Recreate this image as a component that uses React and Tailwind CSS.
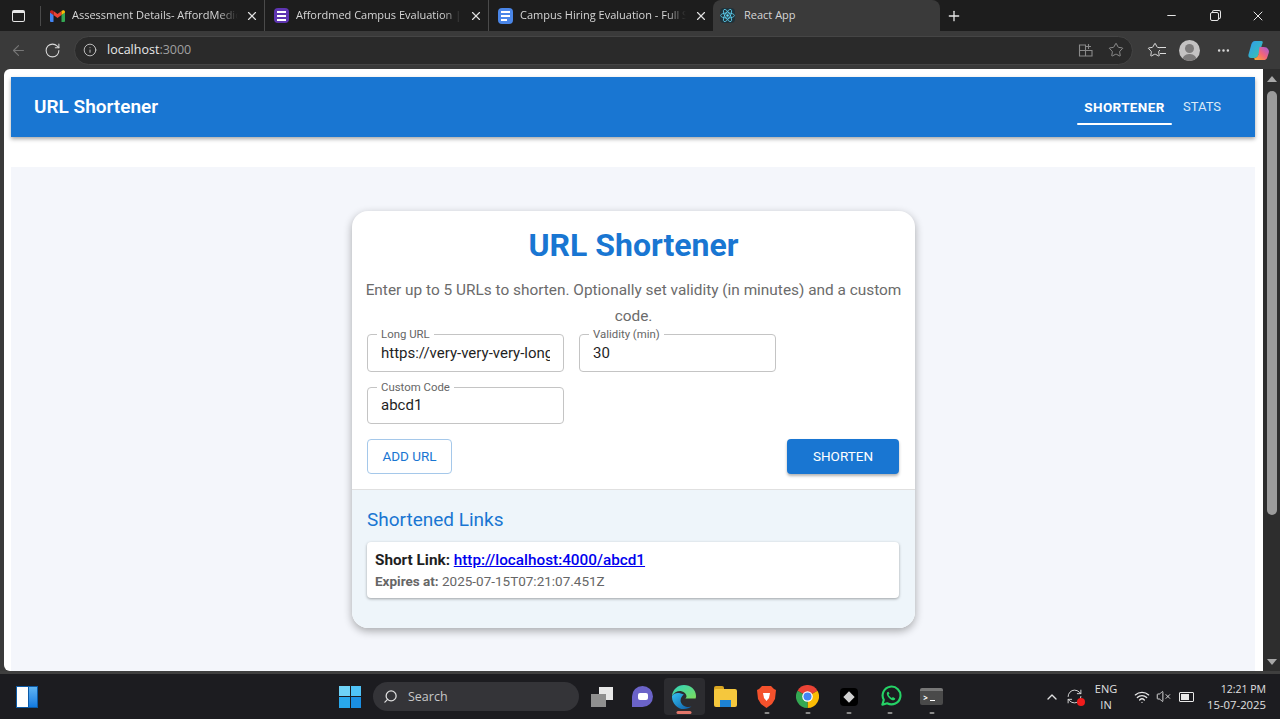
import React from 'react';
import { ArrowLeft, RotateCw, Info, X, Plus, Minus, Star, MoreHorizontal, Search, ChevronUp, Wifi, VolumeX, RefreshCw } from 'lucide-react';

const GmailIcon = () => (
  <svg width="15" height="12" viewBox="0 0 15 12">
    <path d="M0 2v9a1 1 0 0 0 1 1h2.5V5z" fill="#4285f4" />
    <path d="M15 2v9a1 1 0 0 1-1 1h-2.5V5z" fill="#34a853" />
    <path d="M3.5 5 7.5 8l4-3V1l-4 3-4-3z" fill="#ea4335" />
    <path d="M0 2c0-1.6 2-2.2 3.5-1v4L0 2.5z" fill="#c5221f" />
    <path d="M15 2c0-1.6-2-2.2-3.5-1v4L15 2.5z" fill="#fbbc04" />
  </svg>
);

const FormsIcon = () => (
  <div className="w-[15px] h-[15px] rounded-sm bg-[#5e35b1] flex flex-col items-center justify-center gap-[2px]">
    <div className="w-[9px] h-[2px] bg-white" />
    <div className="w-[9px] h-[2px] bg-white" />
    <div className="w-[9px] h-[2px] bg-white" />
  </div>
);

const DocsIcon = () => (
  <div className="w-[15px] h-[16px] rounded-sm bg-[#4a86e8] flex flex-col justify-center gap-[2px] px-[3px]">
    <div className="w-[9px] h-[2px] bg-white" />
    <div className="w-[9px] h-[2px] bg-white" />
    <div className="w-[6px] h-[2px] bg-white" />
  </div>
);

const ReactIcon = () => (
  <div className="w-[15px] h-[15px] rounded-sm bg-[#20323a] flex items-center justify-center">
    <svg width="15" height="15" viewBox="-12 -12 24 24" fill="none" stroke="#61dafb" strokeWidth="1.2">
      <circle r="2" fill="#61dafb" stroke="none" />
      <ellipse rx="11" ry="4.2" />
      <ellipse rx="11" ry="4.2" transform="rotate(60)" />
      <ellipse rx="11" ry="4.2" transform="rotate(120)" />
    </svg>
  </div>
);

const CopilotIcon = () => (
  <svg width="21" height="21" viewBox="0 0 21 21">
    <defs>
      <linearGradient id="cop-a" x1="0" y1="0" x2="1" y2="1">
        <stop offset="0" stopColor="#2f9bf0" />
        <stop offset="1" stopColor="#38c6a8" />
      </linearGradient>
      <linearGradient id="cop-b" x1="0" y1="1" x2="1" y2="0">
        <stop offset="0" stopColor="#f7b32b" />
        <stop offset="0.5" stopColor="#f2647a" />
        <stop offset="1" stopColor="#a05be0" />
      </linearGradient>
    </defs>
    <path d="M7 1h6.500c1 0 1.500.8 1.200 1.800L10.500 15c-.7 2-2 3-4 3H3c-2 0-3-1.500-2.500-3.500l2.800-10C4 2.500 5 1 7 1z" fill="url(#cop-a)" />
    <path d="M11.500 7h4c2.500 0 3.800.6 5 2.800.6 1.200.5 2.200.2 3.200l-1.500 4.500C18.600 19.500 17.400 20 15.500 20H8c-1.500 0-2-1-1.500-2 2-.2 3.200-1.300 4-3.500z" fill="url(#cop-b)" />
  </svg>
);

const EdgeIcon = () => (
  <svg width="24" height="24" viewBox="0 0 24 24">
    <defs>
      <linearGradient id="edge-a" x1="0" y1="0" x2="1" y2="1">
        <stop offset="0" stopColor="#35c1f1" />
        <stop offset="1" stopColor="#0c59a4" />
      </linearGradient>
      <linearGradient id="edge-b" x1="0" y1="0" x2="1" y2="1">
        <stop offset="0" stopColor="#2dd4bf" />
        <stop offset="1" stopColor="#7ddc5c" />
      </linearGradient>
    </defs>
    <path d="M12 0C5.500 0 .5 4.800 0 11c2-3.500 6-5.500 9.500-4.800 3 .6 5 2.800 5 5 0 1-.5 1.600-1.200 2.200h10.300c.3-.8.400-1.600.400-2.400C24 4.500 18.500 0 12 0z" fill="url(#edge-b)" />
    <path d="M0 11c-.3 7 5 13 12 13 3 0 5.500-.8 7.500-2.400-4.500 1.400-9.500-.6-10.700-4.600-.8-2.800.6-5.500 3-7.500C7.500 7.500 2.500 7 0 11z" fill="url(#edge-a)" />
  </svg>
);

const FadeTitle = ({ children }) => (
  <span className="ml-[7px] w-[166px] overflow-hidden whitespace-nowrap text-[11px] text-[#d6d6d6] [mask-image:linear-gradient(to_right,black_88%,transparent)]">{children}</span>
);

const Tab = ({ icon, title, divider = true }) => (
  <div className={`w-[224px] h-[31px] flex items-center pl-[8px] pr-[5px] shrink-0 ${divider ? 'border-r border-[#4a4a4a]' : ''}`}>
    <div className="w-[16px] flex justify-center shrink-0">{icon}</div>
    <FadeTitle>{title}</FadeTitle>
    <X size={14} className="ml-auto text-[#e0e0e0]" />
  </div>
);

const Field = ({ label, value }) => (
  <div className="relative w-[197px] h-[37.5px] border border-[#c4c4c4] rounded flex items-center px-[13px]">
    <span className="absolute left-[9px] -top-[6px] bg-white px-[4px] text-[11.4px] leading-[11px] text-[#666666]">{label}</span>
    <input readOnly value={value} className="block w-full bg-transparent outline-none text-[15px] leading-[18px] text-[#1f1f1f]" />
  </div>
);

const Slot = ({ children, active, dot }) => (
  <div className={`relative w-[41.25px] h-[37px] flex items-center justify-center rounded ${active ? 'bg-[#2c2c30]' : ''}`}>
    {children}
    {dot && <div className="absolute left-1/2 -translate-x-1/2 bottom-[1px] w-[5px] h-[2px] rounded-full bg-[#8a8a8a]" />}
    {active && <div className="absolute left-1/2 -translate-x-1/2 bottom-[1px] w-[15px] h-[3px] rounded-full bg-[#e2766a]" />}
  </div>
);

export default function App() {
  return (
    <div className="w-[1280px] h-[719px] overflow-hidden flex flex-col bg-[#1e1e20] font-['Roboto',sans-serif]">
      {/* tab strip */}
      <div className="h-[31px] shrink-0 bg-[#1d1d1d] flex items-center font-['Open_Sans',sans-serif]">
        <div className="w-[40px] h-full flex items-center justify-center shrink-0 pr-[4px]">
          <div className="w-[13px] h-[12px] rounded-[2px] border-[1.5px] border-[#e6e6e6] border-t-[3px]" />
        </div>
        <div className="w-px h-[20px] bg-[#4a4a4a] shrink-0" />
        <Tab icon={<GmailIcon />} title="Assessment Details- AffordMedical" />
        <Tab icon={<FormsIcon />} title="Affordmed Campus Evaluation | Google" />
        <Tab icon={<DocsIcon />} title="Campus Hiring Evaluation - Full Stack" divider={false} />
        <div className="w-[227px] h-[31px] bg-[#3a3a3a] rounded-t-lg flex items-center pl-[7px] pr-[8px] shrink-0">
          <ReactIcon />
          <span className="ml-[9px] text-[11px] text-[#d6d6d6]">React App</span>
        </div>
        <Plus size={16} className="ml-[6px] text-[#e6e6e6]" />
        <div className="ml-auto flex items-center h-full">
          <div className="w-[42px] flex justify-center"><Minus size={13} className="text-[#e6e6e6]" /></div>
          <div className="w-[44px] flex justify-center relative">
            <div className="w-[9px] h-[9px] border border-[#e6e6e6] rounded-[2px] bg-[#1d1d1d] mt-[2px] shadow-[2px_-2px_0_-1px_#1d1d1d,2px_-2px_0_0_#e6e6e6]" />
          </div>
          <div className="w-[44px] flex justify-center"><X size={16} strokeWidth={1.5} className="text-[#e6e6e6]" /></div>
        </div>
      </div>

      {/* toolbar */}
      <div className="h-[38px] shrink-0 bg-[#3a3a3a] flex items-center pl-[10px] font-['Open_Sans',sans-serif]">
        <ArrowLeft size={17} strokeWidth={1.5} className="text-[#777777]" />
        <RotateCw size={17} strokeWidth={1.5} className="ml-[17px] text-[#d8d8d8]" />
        <div className="ml-[13px] w-[1059px] h-[29px] rounded-full bg-[#2a2a2a] border border-[#454545] flex items-center pl-[8px] pr-[8px]">
          <Info size={14} strokeWidth={1.5} className="text-[#cfcfcf]" />
          <span className="ml-[10px] text-[12.5px] text-[#e8e8e8]">localhost<span className="text-[#a0a0a0]">:3000</span></span>
          <svg className="ml-auto" width="16" height="16" viewBox="0 0 16 16" fill="none" stroke="#8a8a8a" strokeWidth="1.1">
            <path d="M1.5 3h6v11h-6zM1.5 8.5h12.5V14H7.5M10.5 2v5M8 4.5h5" />
          </svg>
          <Star size={16} strokeWidth={1.3} className="ml-[14px] text-[#9a9a9a]" />
        </div>
        <div className="ml-[14px] relative">
          <Star size={16} strokeWidth={1.5} className="text-[#dcdcdc]" />
          <div className="absolute right-[-3px] top-[5px] w-[6px] h-[7px] border-y-[1.5px] border-[#dcdcdc] bg-[#3a3a3a]" />
        </div>
        <div className="ml-[16px] w-[21px] h-[21px] rounded-full bg-[#c4c2c2] flex flex-col items-center justify-end overflow-hidden">
          <div className="w-[9px] h-[9px] rounded-full bg-[#7d7b7b]" />
          <div className="w-[15px] h-[7px] mt-[1px] rounded-t-full bg-[#7d7b7b]" />
        </div>
        <MoreHorizontal size={15} className="ml-[16px] text-[#d8d8d8]" />
        <div className="ml-[17px]"><CopilotIcon /></div>
      </div>

      {/* browser page */}
      <div className="h-[602px] shrink-0 flex pl-[4px] bg-[#3a3a3a]">
        <div className="w-[1259px] bg-white rounded-tl-md rounded-bl-md overflow-hidden pl-[7px] pr-[8px] pt-[8px] flex flex-col">
          <header className="h-[60px] shrink-0 bg-[#1976d2] shadow-[0_2px_4px_rgba(0,0,0,0.35)] flex items-center pl-[23px] pr-[33px] relative">
            <span className="text-[19px] font-semibold text-white">URL Shortener</span>
            <div className="ml-auto flex items-center h-full">
              <div className="relative w-[95px] h-full flex items-center justify-center">
                <span className="text-[13.5px] font-bold tracking-[0.35px] text-white">SHORTENER</span>
                <div className="absolute left-0 right-0 bottom-[12px] h-[2px] rounded bg-white" />
              </div>
              <span className="ml-[11px] w-[39px] text-[13px] text-[#dbe9f7]">STATS</span>
            </div>
          </header>

          <main className="mt-[30px] flex-1 bg-[#f4f6fb] flex justify-center pt-[44px] pl-[1px]">
            <div className="w-[563px] h-[417px] bg-white rounded-2xl shadow-[0_3px_8px_rgba(0,0,0,0.32)] overflow-hidden flex flex-col">
              <div className="h-[278px] shrink-0 pl-[15px] pr-[15px] pt-[13px] flex flex-col">
                <h1 className="text-[32px] leading-[42px] font-bold text-[#1976d2] text-center">URL Shortener</h1>
                <p className="-mx-[4px] mt-[11px] text-[15.4px] leading-[26px] text-[#6b6b6b] text-center">Enter up to 5 URLs to shorten. Optionally set validity (in minutes) and a custom code.</p>
                <div className="mt-[5px] flex gap-[15px]">
                  <Field label="Long URL" value="https://very-very-very-long-url.com" />
                  <Field label="Validity (min)" value="30" />
                </div>
                <div className="mt-[15px]">
                  <Field label="Custom Code" value="abcd1" />
                </div>
                <div className="mt-[15px] flex items-center justify-between pr-[1px]">
                  <button className="w-[85px] h-[35px] rounded border border-[#a5c8ea] text-[13.5px] text-[#1976d2]">ADD URL</button>
                  <button className="w-[112px] h-[35px] rounded bg-[#1976d2] text-[13.5px] text-white shadow-[0_2px_3px_rgba(0,0,0,0.3)]">SHORTEN</button>
                </div>
              </div>
              <div className="flex-1 bg-[#eef5fa] border-t border-[#e0e0e0] pl-[15px] pr-[16px] pt-[17px]">
                <h2 className="text-[19px] leading-[26px] text-[#1976d2]">Shortened Links</h2>
                <div className="mt-[9px] h-[56px] bg-white rounded shadow-[0_1px_3px_rgba(0,0,0,0.35)] px-[8px] pt-[8px]">
                  <p className="text-[15.3px] leading-[21px] font-bold text-[#1f1f1f]">Short Link: <a href="#" className="font-medium text-[#0000ee] underline">http://localhost:4000/abcd1</a></p>
                  <p className="text-[13.5px] leading-[20px] text-[#666666]"><b>Expires at:</b> 2025-07-15T07:21:07.451Z</p>
                </div>
              </div>
            </div>
          </main>
        </div>

        {/* scrollbar */}
        <div className="flex-1 bg-[#2d2d2d] flex flex-col items-center pt-[7px] pb-[6px]">
          <div className="w-0 h-0 border-x-[5px] border-x-transparent border-b-[6px] border-b-[#a8a8a8]" />
          <div className="mt-[9px] w-[10px] h-[424px] rounded-full bg-[#9b9b9b]" />
          <div className="mt-auto w-0 h-0 border-x-[5px] border-x-transparent border-t-[6px] border-t-[#a8a8a8]" />
        </div>
      </div>

      {/* taskbar */}
      <div className="flex-1 border-t-[3px] border-[#3f3f3f] bg-[#1c1c20] flex items-center relative font-['Open_Sans',sans-serif]">
        <div className="ml-[16px] w-[22px] h-[22px] flex gap-[1px] bg-[#0c5aa6] p-[1px]">
          <div className="w-[11px] bg-white" />
          <div className="flex-1 bg-gradient-to-b from-[#5fb4f2] to-[#0f7ae0]" />
        </div>
        <div className="ml-[301px] w-[22px] h-[22px] grid grid-cols-2 gap-[1px]">
          <div className="bg-[#6fd3f7]" />
          <div className="bg-[#4fc3f7]" />
          <div className="bg-[#29a8ec]" />
          <div className="bg-[#1a8fe3]" />
        </div>
        <div className="ml-[12px] w-[206px] h-[29px] rounded-full bg-[#343438] flex items-center pl-[10px]">
          <Search size={15} className="text-[#e0e0e0] -scale-x-100" />
          <span className="ml-[10px] mt-[1px] text-[12.5px] text-[#c8c8c8]">Search</span>
        </div>
        <div className="ml-[2px] flex items-center">
          <Slot>
            <div className="relative w-[22px] h-[20px]">
              <div className="absolute right-0 top-0 w-[14px] h-[13px] bg-[#e8e8e8]" />
              <div className="absolute left-0 bottom-0 w-[15px] h-[13px] bg-[#8f8f8f]" />
            </div>
          </Slot>
          <Slot>
            <div className="w-[21px] h-[21px] rounded-full rounded-bl-none bg-[#6b63c8] flex items-center justify-center">
              <div className="w-[10px] h-[7px] rounded-[2px] bg-white" />
            </div>
          </Slot>
          <Slot active>
            <EdgeIcon />
          </Slot>
          <Slot>
            <div className="relative w-[23px] h-[21px]">
              <div className="absolute left-0 top-0 w-[10px] h-[5px] rounded-t-[2px] bg-[#d9a521]" />
              <div className="absolute left-0 top-[3px] w-full h-[18px] rounded-[2px] bg-[#f5c73d] flex items-end justify-center">
                <div className="w-[11px] h-[7px] bg-[#1d83d4]" />
              </div>
            </div>
          </Slot>
          <Slot dot>
            <svg width="19" height="22" viewBox="0 0 19 22">
              <path d="M5 0h9l3 3 2 1-1 9-3 5-5.5 4L4 18l-3-5-1-9 2-1z" fill="#f4512c" />
              <path d="M6 7h7l-1 5-2.500 3L7 12z" fill="#ffffff" />
            </svg>
          </Slot>
          <Slot dot>
            <svg width="23" height="23" viewBox="-12 -12 24 24">
              <path d="M0 0 L-10.4 -6 A12 12 0 0 1 10.4 -6Z" fill="#ea4335" />
              <path d="M0 0 L10.4 -6 A12 12 0 0 1 0 12Z" fill="#fbbc04" />
              <path d="M0 0 L0 12 A12 12 0 0 1 -10.4 -6Z" fill="#34a853" />
              <circle r="5.500" fill="#fff" />
              <circle r="4.200" fill="#4285f4" />
            </svg>
          </Slot>
          <Slot dot>
            <div className="w-[18px] h-[18px] rounded bg-black flex items-center justify-center">
              <div className="w-[8px] h-[8px] bg-[#d0d0d0] rotate-45" />
            </div>
          </Slot>
          <Slot dot>
            <svg width="23" height="23" viewBox="0 0 24 24" fill="none">
              <path d="M3.500 20.500 5 15.500A9.300 9.300 0 1 1 8.500 19z" stroke="#25d366" strokeWidth="2.200" strokeLinejoin="round" />
              <path d="M8.500 7.500c-1 1.500 0 4 2 6s4.500 3 6 2l.500-1.500-2.500-1.500-1 1c-1 0-3.500-2.500-3.500-3.500l1-1L10 7z" fill="#25d366" />
            </svg>
          </Slot>
          <Slot dot>
            <div className="w-[23px] h-[17px] rounded-[2px] bg-[#4a4a4a] border-t-[3px] border-[#777777] flex items-center pl-[3px] gap-[2px]">
              <span className="text-[8px] leading-[8px] font-bold text-white">&gt;</span>
              <div className="w-[5px] h-[1px] mt-[5px] bg-white" />
            </div>
          </Slot>
        </div>
        <div className="ml-auto flex items-center text-white">
          <ChevronUp size={16} className="text-[#e0e0e0]" />
          <div className="relative ml-[6px]">
            <RefreshCw size={17} strokeWidth={1.3} className="text-[#e0e0e0]" />
            <div className="absolute right-[-2px] bottom-[-1px] w-[8px] h-[8px] rounded-full bg-[#f01c1c]" />
          </div>
          <div className="ml-[9px] w-[28px] text-center text-[11px] leading-[16px] text-[#e0e0e0]">ENG<br />IN</div>
          <Wifi size={16} className="ml-[14px] text-[#e8e8e8]" />
          <VolumeX size={15} strokeWidth={1.5} className="ml-[6px] text-[#e0e0e0]" />
          <div className="ml-[8px] w-[15px] h-[10px] border border-[#e8e8e8] rounded-[1px] p-[1px]">
            <div className="w-[8px] h-full bg-[#e8e8e8]" />
          </div>
          <div className="ml-[12px] mr-[14px] w-[60px] text-right text-[#e0e0e0]">
            <div className="text-[10.5px] leading-[16px]">12:21 PM</div>
            <div className="text-[11.3px] leading-[16px]">15-07-2025</div>
          </div>
        </div>
      </div>
    </div>
  );
}
